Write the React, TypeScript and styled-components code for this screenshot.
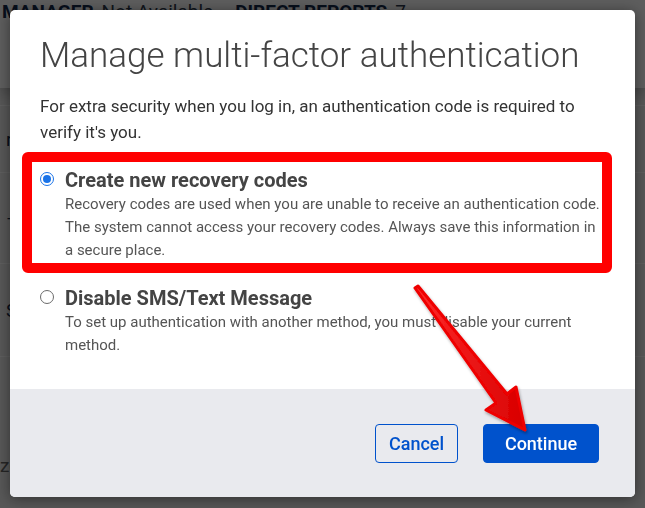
import React from "react";
import styled, { createGlobalStyle } from "styled-components";

const GlobalStyle = createGlobalStyle`
  html, body { margin: 0; padding: 0; }
  body {
    font-family: Roboto, "Liberation Sans", Arial, sans-serif;
    background: #eeeeee;
    width: 645px;
    height: 508px;
    overflow: hidden;
  }
  * { box-sizing: border-box; }
`;

const Page = styled.div`
  width: 645px;
  height: 508px;
  display: flex;
  flex-direction: column;
  overflow: hidden;
`;

const Header = styled.header`
  height: 88px;
  flex: 0 0 88px;
  background: #ffffff;
  box-shadow: 0 5px 14px rgba(0, 0, 0, 0.25);
  padding: 1px 0 0 2px;
  font-size: 19px;
  line-height: 22px;
  color: #13294b;
  white-space: nowrap;
`;

const Label = styled.span`
  font-weight: 700;
  text-transform: uppercase;
`;

const Value = styled.span`
  font-weight: 400;
  color: #2d3a4d;
  margin: 0 22px 0 8px;
`;

const List = styled.div`
  margin-top: 17px;
  display: flex;
  flex-direction: column;
`;

const Row = styled.div<{ $h: number; $muted?: boolean }>`
  height: ${(p) => p.$h}px;
  border-top: ${(p) => (p.$muted ? "none" : "1px solid #ffffff")};
  display: flex;
  align-items: center;
  padding-left: ${(p) => (p.$muted ? 0 : 6)}px;
  padding-top: ${(p) => (p.$muted ? 65 : 0)}px;
  font-size: 19px;
  color: ${(p) => (p.$muted ? "#666" : "#13294b")};
`;

const Backdrop = styled.div`
  position: fixed;
  inset: 0;
  background: rgba(0, 0, 0, 0.635);
`;

const Modal = styled.div`
  position: fixed;
  left: 10px;
  top: 10px;
  width: 625px;
  height: 487px;
  background: #ffffff;
  border-radius: 5px;
  overflow: hidden;
  display: flex;
  flex-direction: column;
  box-shadow: 0 2px 14px rgba(0, 0, 0, 0.45);
`;

const Body = styled.div`
  flex: 1;
  padding: 25px 30px 0 30px;
`;

const Title = styled.h1`
  margin: 0;
  font-size: 35px;
  line-height: 41px;
  font-weight: 300;
  color: #444444;
`;

const Intro = styled.p`
  margin: 17px 0 0;
  font-size: 17px;
  line-height: 26px;
  color: #333333;
`;

const Options = styled.div`
  margin-top: 22px;
  display: flex;
  flex-direction: column;
  gap: 23px;
`;

const Option = styled.label<{ $highlight?: boolean }>`
  position: relative;
  display: flex;
  gap: 11px;
  &::before {
    content: "";
    display: ${(p) => (p.$highlight ? "block" : "none")};
    position: absolute;
    left: -18px;
    right: -7px;
    top: -15px;
    bottom: -11px;
    border: 10px solid #ff0000;
    border-radius: 6px;
    pointer-events: none;
  }
`;

const Radio = styled.span<{ $checked?: boolean }>`
  flex: 0 0 14px;
  width: 14px;
  height: 14px;
  margin-top: 5px;
  border-radius: 50%;
  border: 1.5px solid ${(p) => (p.$checked ? "#1a73e8" : "#6b6b6b")};
  background: #fff;
  display: flex;
  align-items: center;
  justify-content: center;
  &::after {
    content: "";
    display: ${(p) => (p.$checked ? "block" : "none")};
    width: 8px;
    height: 8px;
    border-radius: 50%;
    background: #1a73e8;
  }
`;

const OptionText = styled.div`
  display: flex;
  flex-direction: column;
`;

const OptionTitle = styled.div`
  font-size: 20px;
  line-height: 26px;
  font-weight: 700;
  color: #444444;
`;

const OptionDesc = styled.div`
  font-size: 15px;
  line-height: 23px;
  color: #555555;
`;

const Footer = styled.div`
  flex: 0 0 108px;
  background: #e9eaee;
  display: flex;
  justify-content: flex-end;
  align-items: flex-start;
  gap: 25px;
  padding: 35px 36px 0 0;
`;

const Button = styled.button<{ $primary?: boolean; $w: number }>`
  width: ${(p) => p.$w}px;
  height: 39px;
  border-radius: 4px;
  border: 1px solid #0052cc;
  background: ${(p) => (p.$primary ? "#0052cc" : "transparent")};
  color: ${(p) => (p.$primary ? "#ffffff" : "#0052cc")};
  font-family: Roboto, "Liberation Sans", Arial, sans-serif;
  font-size: 18px;
  font-weight: 500;
  padding: 0;
  cursor: pointer;
`;

const ArrowLayer = styled.svg`
  position: fixed;
  left: 0;
  top: 0;
  width: 645px;
  height: 508px;
  pointer-events: none;
`;

export default function App() {
  return (
    <>
      <GlobalStyle />
      <Page>
        <Header>
          <Label>Manager</Label>
          <Value>Not Available</Value>
          <Label>Direct Reports</Label>
          <Value>7</Value>
        </Header>
        <List>
          <Row $h={67}>r</Row>
          <Row $h={91}>–</Row>
          <Row $h={93}>S</Row>
          <Row $h={1} />
          <Row $h={151} $muted>
            zo
          </Row>
        </List>
      </Page>
      <Backdrop />
      <Modal role="dialog">
        <Body>
          <Title>Manage multi-factor authentication</Title>
          <Intro>
            For extra security when you log in, an authentication code is required to verify it's you.
          </Intro>
          <Options>
            <Option $highlight>
              <Radio $checked />
              <OptionText>
                <OptionTitle>Create new recovery codes</OptionTitle>
                <OptionDesc>
                  Recovery codes are used when you are unable to receive an authentication code. The
                  system cannot access your recovery codes. Always save this information in a secure
                  place.
                </OptionDesc>
              </OptionText>
            </Option>
            <Option>
              <Radio />
              <OptionText>
                <OptionTitle>Disable SMS/Text Message</OptionTitle>
                <OptionDesc>
                  To set up authentication with another method, you must disable your current
                  <br />
                  method.
                </OptionDesc>
              </OptionText>
            </Option>
          </Options>
        </Body>
        <Footer>
          <Button $w={83}>Cancel</Button>
          <Button $w={116} $primary>
            Continue
          </Button>
        </Footer>
      </Modal>
      <ArrowLayer viewBox="0 0 645 508">
        <defs>
          <linearGradient id="arrowFill" x1="0" y1="0" x2="1" y2="0">
            <stop offset="0" stopColor="#ff2b2b" />
            <stop offset="1" stopColor="#d80000" />
          </linearGradient>
          <filter id="arrowShadow" x="-20%" y="-20%" width="140%" height="140%">
            <feDropShadow dx="1" dy="2" stdDeviation="1.5" floodColor="#000" floodOpacity="0.35" />
          </filter>
        </defs>
        <polygon
          points="415,288 418,286 507,394 516,387 525,430 486,410 496,403"
          fill="url(#arrowFill)"
          stroke="#ee0000"
          strokeWidth="3"
          strokeLinejoin="round"
          filter="url(#arrowShadow)"
        />
      </ArrowLayer>
    </>
  );
}
